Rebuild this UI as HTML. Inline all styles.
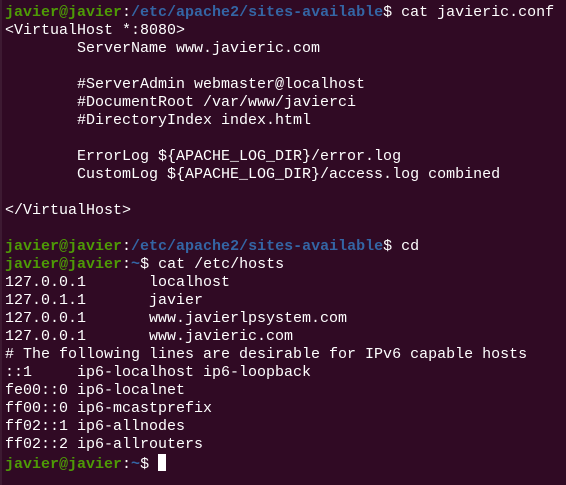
<!DOCTYPE html>
<html><head><meta charset="utf-8"><style>
html,body{margin:0;padding:0;background:#300a24;width:566px;height:485px;overflow:hidden}
pre{margin:0;position:absolute;left:5px;top:4px;font-family:"Liberation Mono",monospace;font-size:15px;line-height:18px;color:#ffffff;white-space:pre}
.g{color:#4e9a06;font-weight:bold}
.b{color:#3465a4;font-weight:bold}
.c{display:inline-block;width:8px;height:17px;background:#fff;vertical-align:-3px}
.edge{position:absolute;left:0;top:0;width:2px;height:485px;background:#3d1a32}
</style></head><body><div class="edge"></div><pre><span class="g">javier@javier</span>:<span class="b">/etc/apache2/sites-available</span>$ cat javieric.conf
&lt;VirtualHost *:8080&gt;
        ServerName www.javieric.com

        #ServerAdmin webmaster@localhost
        #DocumentRoot /var/www/javierci
        #DirectoryIndex index.html

        ErrorLog ${APACHE_LOG_DIR}/error.log
        CustomLog ${APACHE_LOG_DIR}/access.log combined

&lt;/VirtualHost&gt;

<span class="g">javier@javier</span>:<span class="b">/etc/apache2/sites-available</span>$ cd
<span class="g">javier@javier</span>:<span class="b">~</span>$ cat /etc/hosts
127.0.0.1       localhost
127.0.1.1       javier
127.0.0.1       www.javierlpsystem.com
127.0.0.1       www.javieric.com
# The following lines are desirable for IPv6 capable hosts
::1     ip6-localhost ip6-loopback
fe00::0 ip6-localnet
ff00::0 ip6-mcastprefix
ff02::1 ip6-allnodes
ff02::2 ip6-allrouters
<span class="g">javier@javier</span>:<span class="b">~</span>$ <span class="c"></span></pre></body></html>
